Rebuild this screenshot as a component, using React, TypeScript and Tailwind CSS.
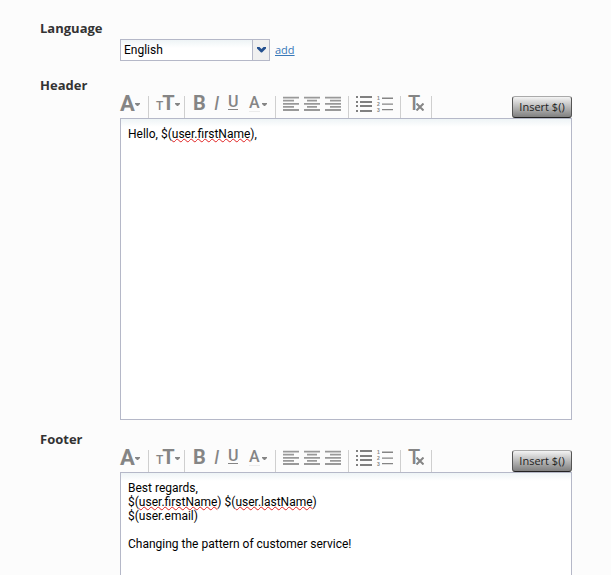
import type { ReactNode } from 'react';
import { cx } from 'class-variance-authority';

function Caret() {
  return (
    <svg aria-hidden="true" viewBox="0 0 5 3" className="mt-[7px] h-[3px] w-[5px] shrink-0 fill-[#858585]">
      <path d="M0 0h5v1L3 3H2L0 1z" />
    </svg>
  );
}

function ToolGroup({ className, children }: { className?: string; children: ReactNode }) {
  return (
    <div className={cx('flex h-[22px] shrink-0 items-start border-r border-[#cfcfcf]', className)}>
      {children}
    </div>
  );
}

function Tool({ label, className, children }: { label: string; className?: string; children: ReactNode }) {
  return (
    <button
      type="button"
      title={label}
      aria-label={label}
      className={cx('flex h-4 shrink-0 cursor-pointer items-start text-[#858585]', className)}
    >
      {children}
    </button>
  );
}

/** Five text lines; the short ones sit at the left, centre or right. */
function AlignIcon({ align }: { align: 'left' | 'center' | 'right' }) {
  const start = { left: 0, center: 3, right: 5 }[align];
  const width = align === 'center' ? 10 : 11;
  return (
    <svg aria-hidden="true" viewBox="0 0 16 16" className="size-4 fill-[#999]">
      <path d="M0 .7h16v1.8H0zM0 6.900h16v1.8H0zM0 13.1h16v1.800H0z" />
      <path d={`M${start} 3.8h${width}v1.8h-${width}zM${start} 10h${width}v1.8h-${width}z`} />
    </svg>
  );
}

function BulletIcon() {
  return (
    <svg aria-hidden="true" viewBox="0 0 16 16" className="size-4 fill-[#808080]">
      <path d="M0 0h2v2H0zM0 5h2v2H0zM0 9h2v2H0zM0 14h2v2H0z" />
      <path d="M4 0h12v2H4zM4 5h12v2H4zM4 9h12v2H4zM4 14h12v2H4z" />
    </svg>
  );
}

function NumberIcon() {
  return (
    <svg aria-hidden="true" viewBox="0 0 16 16" className="size-4 overflow-visible fill-[#858585]">
      <path d="M5 1.6h11v1.300H5zM5 7.500h11v1.300H5zM5 13h11v1.300H5z" />
      <g className="font-['Liberation_Sans',sans-serif] text-[5px] font-bold">
        <text x="0" y="4">1</text>
        <text x="0" y="10">2</text>
        <text x="0" y="16">3</text>
      </g>
    </svg>
  );
}

function Toolbar() {
  return (
    <div
      role="toolbar"
      aria-label="Formatting"
      className="flex h-[22px] font-['Roboto',sans-serif] leading-4"
    >
      <ToolGroup className="w-[29px]">
        <Tool label="Font">
          <span className="text-[22px] font-bold leading-4">A</span>
          <Caret />
        </Tool>
      </ToolGroup>
      <ToolGroup className="w-9 pl-[7px]">
        <Tool label="Font size">
          <span className="flex items-baseline">
            <span className="text-xs font-medium leading-4">T</span>
            <span className="-ml-px text-xl font-bold leading-[14px]">T</span>
          </span>
          <Caret />
        </Tool>
      </ToolGroup>
      <ToolGroup className="w-[91px] pl-2">
        <Tool label="Bold" className="w-[21px]">
          <span className="text-xl font-bold leading-[14px]">B</span>
        </Tool>
        <Tool label="Italic" className="w-3.5">
          <span className="text-xl italic leading-[14px]">I</span>
        </Tool>
        <Tool label="Underline" className="w-[21px]">
          <span className="h-[14px] border-b border-[#858585] text-base font-medium leading-3">U</span>
        </Tool>
        <Tool label="Text colour" className="gap-0.5">
          <span className="h-4 border-b border-[#ebebeb] text-base font-medium leading-[14px]">A</span>
          <Caret />
        </Tool>
      </ToolGroup>
      <ToolGroup className="w-[73px] gap-[5px] pl-[7px]">
        <Tool label="Align left">
          <AlignIcon align="left" />
        </Tool>
        <Tool label="Align centre">
          <AlignIcon align="center" />
        </Tool>
        <Tool label="Align right">
          <AlignIcon align="right" />
        </Tool>
      </ToolGroup>
      <ToolGroup className="w-[52px] gap-[5px] pl-[7px]">
        <Tool label="Bulleted list">
          <BulletIcon />
        </Tool>
        <Tool label="Numbered list">
          <NumberIcon />
        </Tool>
      </ToolGroup>
      <ToolGroup className="w-[31px] pl-[7px]">
        <Tool label="Clear formatting">
          <span className="text-xl font-medium leading-[14px]">T</span>
          <svg aria-hidden="true" viewBox="0 0 8 8" className="-ml-1 mt-[7px] size-2 stroke-[#858585] stroke-2">
            <path d="M0.5 0.5l7 7M7.5 0.5l-7 7" />
          </svg>
        </Tool>
      </ToolGroup>
    </div>
  );
}

/** A word that the spelling checker has marked. */
function Marked({ children }: { children: ReactNode }) {
  return (
    <span className="underline decoration-[#e02020] decoration-wavy decoration-1 underline-offset-0 [text-decoration-skip-ink:none]">
      {children}
    </span>
  );
}

function EditorField({ id, label, children }: { id: string; label: string; children: ReactNode }) {
  return (
    <section>
      <h2 id={id} className="text-[13px] font-bold leading-4 text-[#333]">
        {label}
      </h2>
      <div className="ml-20 mt-[3px]">
        <div className="flex items-end justify-between">
          <Toolbar />
          <button
            type="button"
            className="h-[22px] w-[60px] shrink-0 cursor-pointer rounded-[3px] border border-[#555] border-b-[#222] border-t-[#aaa] bg-linear-to-b from-[#f4f4f4] to-[#808080] text-[11px] leading-5 text-[#222]"
          >
            Insert $()
          </button>
        </div>
        <div
          contentEditable
          suppressContentEditableWarning
          spellCheck={false}
          role="textbox"
          aria-multiline="true"
          aria-labelledby={id}
          className="min-h-[302px] border border-[#b5b8c8] bg-white bg-linear-to-b from-[#eef4f6] to-white to-[8px] px-[7px] py-2 font-['Roboto',sans-serif] text-xs leading-[14px] text-black outline-none"
        >
          {children}
        </div>
      </div>
    </section>
  );
}

export default function App() {
  return (
    <main className="h-screen overflow-hidden bg-[#fcfcfc] pl-10 pr-[39px] pt-5 font-['Open_Sans','Noto_Sans',sans-serif]">
      <div className="mb-4">
        <label htmlFor="language" className="block text-[13px] font-bold leading-4 text-[#333]">
          Language
        </label>
        <div className="ml-20 mt-[3px] flex items-center">
          <div className="grid h-[22px] w-[150px] grid-cols-[1fr_17px] border border-[#b5b8c8] bg-white">
            <select
              id="language"
              className="col-span-2 col-start-1 row-start-1 appearance-none bg-linear-to-b from-[#eef4f6] to-white to-[8px] px-[3px] font-['Roboto',sans-serif] text-xs text-black outline-none"
            >
              <option>English</option>
            </select>
            <span className="pointer-events-none z-10 col-start-2 row-start-1 flex items-center justify-center border-l border-[#b5b8c8] bg-[#f0f0f0]">
              <svg aria-hidden="true" viewBox="0 0 9 6" className="h-1.5 w-[9px] fill-[#24508f]">
                <path d="M0 0h2.500l2 2 2-2H9v1.500L5 5.500H4L0 1.500z" />
              </svg>
            </span>
          </div>
          <a href="#add" className="ml-[5px] text-[11px] leading-4 text-[#3878b8] underline">
            add
          </a>
        </div>
      </div>

      <div className="flex flex-col gap-[11px]">
        <EditorField id="header-label" label="Header">
          <p>
            Hello, $(<Marked>user.firstName</Marked>),
          </p>
        </EditorField>
        <EditorField id="footer-label" label="Footer">
          <p>Best regards,</p>
          <p>
            $(<Marked>user.firstName</Marked>) $(<Marked>user.lastName</Marked>)
          </p>
          <p>$(user.email)</p>
          <p>
            <br />
          </p>
          <p>Changing the pattern of customer service!</p>
        </EditorField>
      </div>
    </main>
  );
}
